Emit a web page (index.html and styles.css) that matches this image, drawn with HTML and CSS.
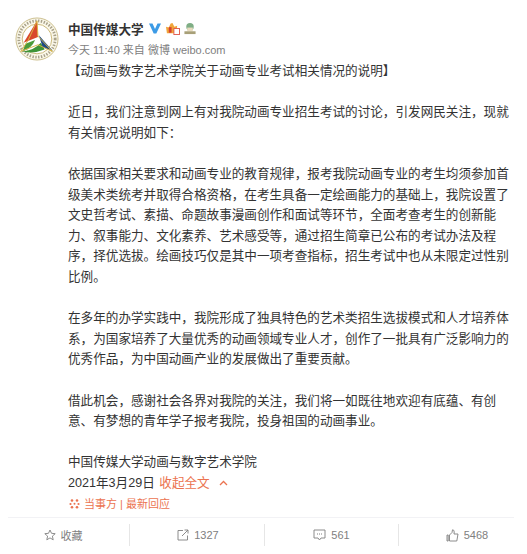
FILE: index.html
```html
<!DOCTYPE html>
<html lang="zh-CN">
<head>
    <meta charset="UTF-8">
    <meta name="viewport" content="width=device-width, initial-scale=1.0">
    <title>中国传媒大学</title>
    <link rel="stylesheet" href="styles.css">
</head>
<body>
    <div class="card">
        <div class="post">
            <!-- avatar -->
            <svg class="avatar" width="44" height="44" viewBox="0 0 46 46">
                <circle cx="23" cy="23" r="22" fill="#fbf8ea" stroke="#c9bd8c" stroke-width="1"/>
                <circle cx="23" cy="23" r="19" fill="none" stroke="#a9a28a" stroke-width="3" stroke-dasharray="1.5 1.5"/>
                <circle cx="23" cy="23" r="15.5" fill="#fff" stroke="#c9b878" stroke-width="1"/>
                <path d="M23 4 L9 27 L24 21 Z" fill="#d9482b"/>
                <path d="M8 36 Q20 35 27 27 L31 34 Q18 39 8 36 Z" fill="#3f9438"/>
                <path d="M8 36 Q18 32 21 24 L11 28 Z" fill="#4a9a3a"/>
                <path d="M25 19 L39 35 L29 32 Z" fill="#1d4a86"/>
                <path d="M23 4 L24 20 L39 36 L24 29 L6 36 L14 24 Z" fill="none" stroke="#d8b445" stroke-width="1"/>
            </svg>

            <div class="main">
                <div class="name-row">
                    <span class="name">中国传媒大学</span>
                    <svg class="badge-v" width="14" height="11" viewBox="0 0 13 11">
                        <path d="M0.5 0.5 H4 L6.5 6 L9 0.5 H12.5 L7.8 10.5 H5.2 Z" fill="#3c9be6"/>
                    </svg>
                    <svg class="badge" width="15" height="13" viewBox="0 0 16 14">
                        <path d="M1 5 L4 6 L6 1.5 L8 1 L10 5 L13 4 L12.5 12 H2 Z" fill="#f0a53a"/>
                        <rect x="4" y="5.5" width="3" height="6" fill="#d8402e"/>
                        <rect x="9.5" y="7" width="6" height="6.5" fill="#fff" stroke="#e0584a"/>
                    </svg>
                    <svg class="badge" width="14" height="13" viewBox="0 0 14 14">
                        <circle cx="7" cy="5" r="4" fill="#7fae85"/>
                        <rect x="4" y="6" width="6" height="4" fill="#e9dcc0"/>
                        <rect x="1" y="10" width="12" height="3" fill="#a8a078"/>
                    </svg>
                </div>
                <div class="meta">今天 11:40 来自 微博 weibo.com</div>

                <p>【动画与数字艺术学院关于动画专业考试相关情况的说明】</p>
                <p>近日，我们注意到网上有对我院动画专业招生考试的讨论，引发网民关注，现就有关情况说明如下：</p>
                <p>依据国家相关要求和动画专业的教育规律，报考我院动画专业的考生均须参加首级美术类统考并取得合格资格，在考生具备一定绘画能力的基础上，我院设置了文史哲考试、素描、命题故事漫画创作和面试等环节，全面考查考生的创新能力、叙事能力、文化素养、艺术感受等，通过招生简章已公布的考试办法及程序，择优选拔。绘画技巧仅是其中一项考查指标，招生考试中也从未限定过性别比例。</p>
                <p>在多年的办学实践中，我院形成了独具特色的艺术类招生选拔模式和人才培养体系，为国家培养了大量优秀的动画领域专业人才，创作了一批具有广泛影响力的优秀作品，为中国动画产业的发展做出了重要贡献。</p>
                <p>借此机会，感谢社会各界对我院的关注，我们将一如既往地欢迎有底蕴、有创意、有梦想的青年学子报考我院，投身祖国的动画事业。</p>
                <div class="sign">中国传媒大学动画与数字艺术学院</div>
                <div class="date">2021年3月29日 <span class="collapse">收起全文</span>
                    <svg class="chevron" width="9" height="6" viewBox="0 0 9 6">
                        <path d="M1 5 L4.5 1.5 L8 5" fill="none" stroke="#eb7350" stroke-width="1.3"/>
                    </svg>
                </div>
                <div class="tag">
                    <svg width="11" height="11" viewBox="0 0 11 11">
                        <g fill="#eb7350">
                            <circle cx="3" cy="2.5" r="1.3"/>
                            <circle cx="8" cy="2.5" r="1.3"/>
                            <circle cx="1.5" cy="6" r="1.1"/>
                            <circle cx="9.5" cy="6" r="1.1"/>
                            <circle cx="3" cy="9.3" r="1.3"/>
                            <circle cx="8" cy="9.3" r="1.3"/>
                            <circle cx="5.5" cy="5.8" r="1"/>
                        </g>
                    </svg>
                    <span>当事方 | 最新回应</span>
                </div>
            </div>
        </div>

        <div class="toolbar">
            <div class="tool">
                <svg width="12" height="12" viewBox="0 0 12 12">
                    <path d="M6 1 L7.5 4.3 L11.2 4.7 L8.4 7.1 L9.2 10.8 L6 8.9 L2.8 10.8 L3.6 7.1 L0.8 4.7 L4.5 4.3 Z" fill="none" stroke="#808080" stroke-width="0.9"/>
                </svg>
                <span>收藏</span>
            </div>
            <div class="tool">
                <svg width="12" height="12" viewBox="0 0 12 12">
                    <path d="M6 1.5 H1 V11 H10.5 V6.5 M5 7 L11 1 M7.5 1 H11 V4.5" fill="none" stroke="#808080" stroke-width="0.9"/>
                </svg>
                <span>1327</span>
            </div>
            <div class="tool">
                <svg width="13" height="12" viewBox="0 0 13 12">
                    <path d="M1 1 H12 V9 H8 L6.5 11 L5 9 H1 Z" fill="none" stroke="#808080" stroke-width="0.9"/>
                    <path d="M4 5 H5 M6 5 H7 M8 5 H9" stroke="#808080" stroke-width="1"/>
                </svg>
                <span>561</span>
            </div>
            <div class="tool">
                <svg width="13" height="13" viewBox="0 0 13 13">
                    <path d="M3.5 6 L6 3.5 L6.5 0.8 Q8.3 0.8 8.2 3 L8 5 H12 L10.8 12 H3.5 Z M1 6 H2.2 V12 H1 Z" fill="none" stroke="#808080" stroke-width="0.9"/>
                </svg>
                <span>5468</span>
            </div>
        </div>
    </div>
</body>
</html>
```

FILE: styles.css
```css
body {
    margin: 0;
    background-color: #fff;
    font-family: "Liberation Sans", "Noto Sans CJK SC", sans-serif;
    font-size: 12.6px;
    color: #333;
}

.card {
    width: 506px;
    margin-left: 8px;
}

.post {
    display: flex;
    align-items: flex-start;
    gap: 9px;
    padding: 17px 0 0 7px;
}

.avatar {
    flex-shrink: 0;
}

.main {
    flex-shrink: 0;
    width: 442px;
}

.name-row {
    display: flex;
    align-items: center;
    gap: 3px;
    height: 20px;
    margin-top: 1px;
}

.name {
    font-weight: bold;
    margin-right: 1px;
}

.meta {
    font-size: 11px;
    color: #808080;
    line-height: 18px;
    margin: 3px 0 2px;
}

p {
    margin: 0 0 20.6px;
    line-height: 20.6px;
}

.sign,
.date {
    line-height: 20.6px;
}

.collapse {
    color: #eb7350;
    margin-left: 1px;
}

.chevron {
    margin-left: 6px;
    vertical-align: 1px;
}

.tag {
    display: flex;
    align-items: center;
    gap: 4px;
    height: 20px;
    padding-left: 1px;
    font-size: 11px;
    color: #eb7350;
}

.toolbar {
    display: grid;
    grid-template-columns: 122px 135px 134px 115px;
    margin-top: 4px;
    border-top: 1px solid #f2f2f5;
    padding: 6px 0;
}

.tool {
    display: flex;
    align-items: center;
    justify-content: center;
    gap: 5px;
    height: 22px;
    font-size: 11px;
    color: #808080;
    border-right: 1px solid #e6e6e6;
}

.tool:first-child {
    padding-right: 11px;
}

.tool:nth-child(2) {
    padding-left: 2px;
}

.tool:last-child {
    padding-left: 21px;
    border-right: none;
}
```
